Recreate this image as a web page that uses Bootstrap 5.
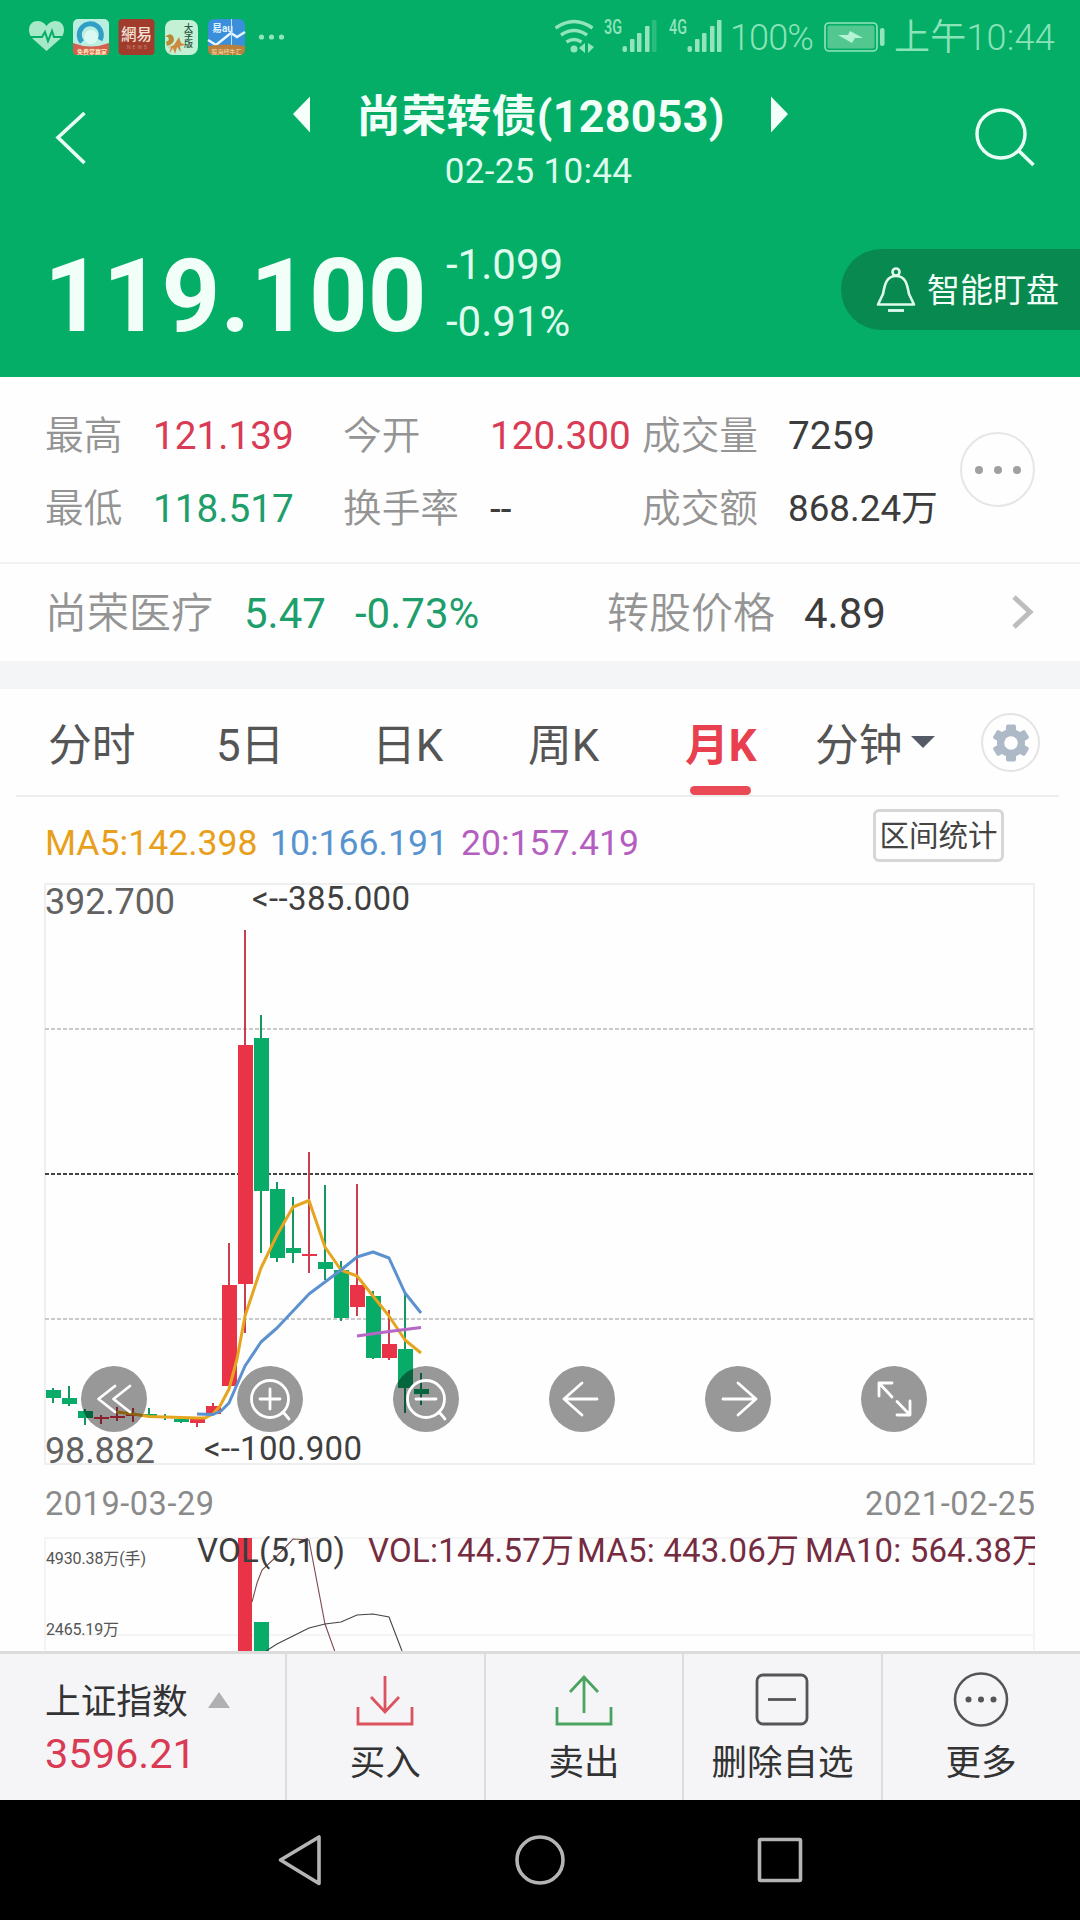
<!DOCTYPE html>
<html lang="zh-CN">
<head>
<meta charset="utf-8">
<meta name="viewport" content="width=device-width, initial-scale=1">
<title>尚荣转债(128053)</title>
<link rel="stylesheet" href="https://cdn.jsdelivr.net/npm/bootstrap@5.3.0/dist/css/bootstrap.min.css">
<style>
body{font-family:Roboto,"Noto Sans CJK SC",sans-serif;width:1080px;height:1920px;overflow:hidden;color:#3c3c3c;background:#fefefe;line-height:1}
svg{display:block;flex:none}
svg text{font-family:Roboto,"Noto Sans CJK SC",sans-serif}
.app{width:1080px;height:1920px}
.hd{background:#04ae67;height:377px;color:#f2fff8}
.statusbar{height:72px;color:#8be3b9;font-size:36px;font-weight:350}
.statusbar .pct{width:95px;padding-left:3px;letter-spacing:-.9px;line-height:76px}
.statusbar .clock{line-height:77px;margin-left:8px;letter-spacing:.2px}
.titlebar{height:128px}
.titlecol{width:495px;margin-left:208px}
.sec-name{font-size:44.8px;font-weight:700;line-height:58px;letter-spacing:.3px;margin-top:16px}
.sec-time{font-size:35px;line-height:44px;color:#dffbee;margin-top:4px;letter-spacing:.3px;padding-right:4px}
.pricebar{height:177px}
.px-now{font-size:102.5px;font-weight:700;line-height:110px;margin-top:41px;padding-left:44px;width:446px}
.px-chg{font-size:42px;line-height:57px;margin-top:36px;color:#dffbee}
.watch{width:239px;height:81px;border-radius:41px 0 0 41px;background:#07894f;margin-top:49px;font-size:33px;padding-left:35px}
.watch span{margin-left:11px;line-height:80px;padding-top:3px}
.stats{height:187px;border-bottom:2px solid #f1f1f1;padding:22px 0 0 45px}
.statgrid{display:grid;grid-template-columns:108px 190px 147px 152px 146px 160px;grid-auto-rows:73px;line-height:73px;font-size:38.7px;width:903px;white-space:nowrap}
.statgrid .amt{font-size:36.8px}
.lbl{color:#949494;font-weight:350}
.up{color:#d93a54}.down{color:#1d9e6b}
.morebtn{width:75px;height:75px;border:2px solid #e6e6e6;margin:33px 0 0 12px;gap:11px}
.morebtn i{width:8px;height:8px;border-radius:50%;background:#a0a0a0}
.stockrow{height:97px;padding-left:45px;font-size:42px;line-height:100px}
.stockgrid{display:grid;grid-template-columns:199px 111px 252px 197px 207px;white-space:nowrap}
.band{height:28px;background:#f4f5f7}
.tabrow{height:108px;margin:0 21px 0 16px;border-bottom:2px solid #ededed;font-size:43.8px;padding-left:32px}
.tabrow .nav-link{padding:0;color:#555;line-height:114px;height:107px;font-weight:400;text-align:left;white-space:nowrap}
.tabrow .nav-link.active{color:#e8404f;font-weight:700;position:relative}
.tabrow .nav-link.active::after{content:"";position:absolute;left:5px;bottom:1px;width:61px;height:9px;border-radius:5px;background:#ea4a55}
.gearbtn{width:59px;height:59px;border:2px solid #e4e4e4;margin-top:24px}
.maline{height:85px;padding:0 76px 0 45px;font-size:35.6px}
.maline span{line-height:92px;white-space:nowrap}
.rangebtn{width:131px;height:53px;border:3px solid #d6d6d6;border-radius:6px;font-size:29.5px;line-height:48px;padding:0;margin-top:12px;color:#444;background:none;text-align:center;white-space:nowrap}
.plot{height:769px}
.bottombar{height:149px;border-top:3px solid #dcdcdd;background:#f5f5f8;color:#333}
.idx{width:285px;padding:28px 0 0 45px}
.idx .nm{font-size:35.7px;line-height:40px}
.idx .vl{font-size:41.5px;line-height:50px;margin-top:7px}
.act{width:198.6px;border-left:2px solid #dcdcdd;font-size:35.5px;padding-top:17px}
.act span{line-height:46px;margin-top:13px;white-space:nowrap}
.sysnav{height:120px;background:#000}
</style>
</head>
<body>
<div class="app d-flex flex-column">
<header class="hd">
  <div class="statusbar d-flex">
    <svg width="555" height="72" viewBox="0 0 555 72">
      <path d="M46.500 51 33 39q-4-4-4-9c0-10 12-12 17.500-4C52 18 64 20 64 30q0 5-4 9z" fill="#a5e9c8"/>
      <path d="M30 37h12l3-5 3 9 4-10 2 6h11" fill="none" stroke="#04ae67" stroke-width="2"/>
      <rect x="73" y="19" width="36" height="36" rx="5" fill="#b9eee0"/>
      <path d="M82 42a11 11 0 1 1 18-2" fill="none" stroke="#2f9fc6" stroke-width="5"/><circle cx="91" cy="37" r="7" fill="#dcf8f2"/>
      <path d="M73 43q18 7 36 0v8q0 4-4 4H77q-4 0-4-4z" fill="#d4604f"/><text x="77" y="54" font-size="6" font-weight="700" fill="#ffe5bc">免费掌赢家</text>
      <rect x="118.500" y="19" width="36" height="36" rx="4" fill="#a13c2c"/><text x="121" y="40" font-size="15.500" font-weight="500" fill="#f2e3d8" style="font-family:'Noto Sans CJK TC'">網易</text><text x="127" y="49" font-size="5" letter-spacing="2" fill="#e0aa9a">NEWS</text>
      <rect x="165" y="20" width="33" height="35" rx="8" fill="#c4f1d6"/>
      <text font-size="9" font-weight="500" fill="#28533c"><tspan x="184" y="31">大</tspan><tspan x="184" y="39">字</tspan><tspan x="184" y="47">版</tspan></text>
      <path d="M165 37q5-5 8-1 3 6-3 9l-3 1-1-4 3-2-1-3z" fill="#b98a36"/><path d="M169 54l2-7-4 1 7-3 5-8 2 6 5 2-6 1 1 6-4-5-2 7-2-6z" fill="#cf8840"/>
      <rect x="208" y="19" width="37" height="36" rx="6" fill="#3a8fdb"/><path d="M208 40l8 5 15-12 6 4 8-5" fill="none" stroke="#e8f8ff" stroke-width="2.500"/><path d="M231.500 19v26" stroke="#bfe3f8"/><text x="212" y="32" font-size="10" font-weight="700" fill="#dff3ff">易au</text><path d="M208 46q18-3 37 0v3q0 6-6 6h-25q-6 0-6-6z" fill="#b9803e"/><text x="211.500" y="54" font-size="6" fill="#ffe4b2">股海经牛汇</text>
      <g fill="#92e4bd"><circle cx="261.500" cy="37" r="2.600"/><circle cx="271.500" cy="37" r="2.600"/><circle cx="281.500" cy="37" r="2.600"/></g>
    </svg>
    <svg width="172" height="72" viewBox="0 0 172 72" fill="#92e4bd">
      <g fill="none" stroke="#92e4bd" stroke-width="3.400"><path d="M.5 28q18.500-13 37 0"/><path d="M6 35q13-9 26 0"/><path d="M11.500 42q7.500-5 15 0"/></g>
      <circle cx="19" cy="49" r="3.500"/><path d="M24 48l6-5v10zM33 43v10l6-6z"/>
      <text x="49" y="34" font-size="20" font-weight="500" textLength="18" lengthAdjust="spacingAndGlyphs">3G</text>
      <text x="114" y="34" font-size="20" font-weight="500" textLength="18" lengthAdjust="spacingAndGlyphs">4G</text>
      <rect x="67.500" y="46" width="4.500" height="6" rx="2"/><rect x="75" y="39" width="4.500" height="13" rx="1"/><rect x="82" y="33" width="4.500" height="19" rx="1"/><rect x="90" y="26" width="4.500" height="26" rx="1"/><rect x="97" y="20" width="4.500" height="32" rx="1" opacity=".28"/>
      <rect x="132.500" y="46" width="4.500" height="6" rx="2"/><rect x="140" y="39" width="4.500" height="13" rx="1"/><rect x="147" y="33" width="4.500" height="19" rx="1"/><rect x="155" y="26" width="4.500" height="26" rx="1"/><rect x="162" y="20" width="4.500" height="32" rx="1"/>
    </svg>
    <span class="pct">100%</span>
    <svg width="64" height="72" viewBox="822 0 64 72"><rect x="825" y="23" width="52" height="28" rx="4" fill="none" stroke="#92e4bd" stroke-width="1.600"/><rect x="827.500" y="25.500" width="47" height="23" rx="2" fill="#52c790"/><path d="M838 35h10l2-4 13 7h-8l-3 5z" fill="#b5f3d6"/><rect x="880" y="28" width="4.500" height="18" rx="2" fill="#92e4bd"/></svg>
    <span class="clock text-nowrap">上午10:44</span>
  </div>
  <div class="titlebar d-flex">
    <svg width="85" height="128" viewBox="0 72 85 128" overflow="visible"><path d="M84.500 113 58 137.500 84.500 163" fill="none" stroke="#e9fff5" stroke-width="3.600"/></svg>
    <div class="titlecol d-flex justify-content-between">
      <svg width="17" height="128" viewBox="293 72 17 128"><path d="M310 96.500v36L293 114z" fill="#f4fffa"/></svg>
      <div class="text-center text-nowrap"><div class="sec-name">尚荣转债(128053)</div><div class="sec-time">02-25 10:44</div></div>
      <svg width="17" height="128" viewBox="771 72 17 128"><path d="M771 96.500v36L788 114z" fill="#f4fffa"/></svg>
    </div>
    <svg width="292" height="128" viewBox="788 72 292 128"><circle cx="1001" cy="134" r="24" fill="none" stroke="#e9fff5" stroke-width="3.400"/><path d="M1018 150l15.500 15" stroke="#e9fff5" stroke-width="3.600"/></svg>
  </div>
  <div class="pricebar d-flex">
    <div class="px-now">119.100</div>
    <div class="px-chg flex-grow-1">-1.099<br>-0.91%</div>
    <div class="watch d-flex align-items-center">
      <svg width="40" height="46" viewBox="0 0 40 46" fill="none" stroke="#dffbee" stroke-width="2.600"><circle cx="20" cy="5" r="3.500"/><path d="M2 37.500h36L33 27c-2-11-4-18-13-18S9 16 7 27z" stroke-linejoin="round"/><path d="M12 43.500h16" stroke-width="2.800"/></svg>
      <span>智能盯盘</span>
    </div>
  </div>
</header>

<section class="stats d-flex">
  <div class="statgrid">
    <span class="lbl">最高</span><span class="up">121.139</span><span class="lbl">今开</span><span class="up">120.300</span><span class="lbl">成交量</span><span>7259</span>
    <span class="lbl">最低</span><span class="down">118.517</span><span class="lbl">换手率</span><span>--</span><span class="lbl">成交额</span><span class="amt">868.24万</span>
  </div>
  <div class="morebtn rounded-circle d-flex align-items-center justify-content-center"><i></i><i></i><i></i></div>
</section>
<section class="stockrow d-flex">
  <div class="stockgrid"><span class="lbl">尚荣医疗</span><span class="down">5.47</span><span class="down">-0.73%</span><span class="lbl">转股价格</span><span>4.89</span></div>
  <svg width="24" height="98" viewBox="1011 564 24 98"><path d="M1014 597l16 15-16 15" fill="none" stroke="#bdbdbd" stroke-width="5"/></svg>
</section>
<div class="band"></div>
<nav class="tabrow nav flex-nowrap">
  <a class="nav-link" style="width:168px">分时</a><a class="nav-link" style="width:156px">5日</a><a class="nav-link" style="width:156px">日K</a><a class="nav-link" style="width:157px">周K</a><a class="nav-link active" style="width:130px">月K</a><a class="nav-link" style="width:96px">分钟</a>
  <svg width="70" height="105" viewBox="911 689 70 105"><path d="M911 736h24l-12 12z" fill="#555b66"/></svg>
  <div class="gearbtn rounded-circle d-flex align-items-center justify-content-center">
    <svg width="38" height="38" viewBox="-19 -19 38 38" fill="#adb9c7"><g id="teeth"><rect x="-5" y="-18.500" width="10" height="37" rx="2"/><rect x="-5" y="-18.500" width="10" height="37" rx="2" transform="rotate(60)"/><rect x="-5" y="-18.500" width="10" height="37" rx="2" transform="rotate(120)"/></g><circle r="14"/><circle r="6.800" fill="#fefefe"/></svg>
  </div>
</nav>
<div class="maline d-flex">
  <span style="width:225px;color:#e8a01c">MA5:142.398</span><span style="width:191px;color:#5794cf">10:166.191</span><span class="flex-grow-1" style="color:#b45fc0">20:157.419</span>
  <button class="rangebtn" type="button">区间统计</button>
</div>

<svg class="plot" id="plot" width="1080" height="769" viewBox="0 882 1080 769">
  <g fill="none" stroke="#efefef" stroke-width="2"><path d="M45 884H1034V1464H45z"/><path d="M45 1650V1538H1034V1650M45 1635H1034" stroke="#f4f4f4"/></g>
  <g stroke-width="1.500" stroke-dasharray="4 2"><path d="M45 1029H1034M45 1319H1034" stroke="#b9b9b9"/><path d="M45 1174H1034" stroke="#444" stroke-width="1.800"/></g>
  <g id="candles"></g>
  <g fill="none" stroke-width="3" stroke-linejoin="round">
    <path stroke="#e5a51f" d="M117 1412l16 2 16 2.500 16 .5 32 1h8l8-4 7-8 9-17 8-30 8-43 16-48 16-33 16-28 16-6.500 16 46.500 16 23 16 6 16 20 16 20 16 24 16 13"/>
    <path stroke="#5b91cf" d="M197 1414l16 .5 8-3.500 8-8 16-37 16-24 16-14 32-34 32-24 16-13 16-5 16 6 16 35 16 20"/>
    <path stroke="#b666c4" d="M357 1336l32-4.500 32-4"/>
  </g>
  <g font-size="36" fill="#626262"><text x="45" y="914" textLength="130">392.700</text><text x="45" y="1463" textLength="110">98.882</text></g>
  <g font-size="33" fill="#3f3f3f"><text x="252" y="910" textLength="158">&lt;--385.000</text><text x="204" y="1460" textLength="158">&lt;--100.900</text></g>
  <g font-size="32.500" fill="#8a8a8a"><text x="45" y="1515" textLength="169">2019-03-29</text><text x="865" y="1515" textLength="170">2021-02-25</text></g>
  <rect x="238" y="1538" width="14" height="113" fill="#e93448"/><rect x="254" y="1622" width="15" height="29" fill="#08ab67"/>
  <g fill="none" stroke-width="1.100"><path stroke="#7d4a4e" d="M252 1602l5-19 5-13 15-14 16-17 16 1 16 84 10 28"/><path stroke="#444" d="M266 1651l11-7 16-8 16-8 16-4 16-2 16-7 16-1 16 3 13 34"/></g>
  <g font-size="16" fill="#555"><text x="46" y="1564" textLength="100">4930.38万(手)</text><text x="46" y="1635" textLength="73">2465.19万</text></g>
  <svg x="0" y="1536" width="1035" height="60" viewBox="0 1536 1035 60"><g font-size="33"><text x="197" y="1562" textLength="148" fill="#3d3d3d">VOL(5,10)</text><g fill="#762c40"><text x="368" y="1562" textLength="206">VOL:144.57万</text><text x="577" y="1562" textLength="222">MA5: 443.06万</text><text x="805" y="1562" textLength="240">MA10: 564.38万</text></g></g></svg>
  <g fill="#000" fill-opacity=".4"><circle cx="114" cy="1399" r="33"/><circle cx="270" cy="1399" r="33"/><circle cx="426" cy="1399" r="33"/><circle cx="582" cy="1399" r="33"/><circle cx="738" cy="1399" r="33"/><circle cx="894" cy="1399" r="33"/></g>
  <g fill="none" stroke="#fff" stroke-width="2.800" stroke-linecap="round" stroke-linejoin="round">
    <path d="M115 1386l-16.500 13 16.500 13M130 1386l-16.500 13 16.500 13"/>
    <circle cx="270" cy="1399" r="18.500"/><path d="M260 1399h20M270 1389v20M282 1413l2 0 5 6"/>
    <circle cx="426" cy="1399" r="18.500"/><path d="M416 1399h20M438 1413l2 0 5 6"/>
    <path d="M582 1383l-18 16 18 16M564 1399h33"/><path d="M738 1383l18 16-18 16M756 1399h-33"/>
    <path d="M892 1383h-13v13M879.500 1383.500l12.500 13.500M910 1401v14h-13M909.500 1414.500L897 1401.500"/>
  </g>
</svg>

<footer class="bottombar d-flex">
  <div class="idx">
    <div class="nm d-flex">上证指数<svg class="ms-auto" style="margin-right:55px" width="22" height="40" viewBox="0 0 22 40"><path d="M0 26 11 10l11 16z" fill="#b0b0b3"/></svg></div>
    <div class="vl up">3596.21</div>
  </div>
  <div class="act d-flex flex-column align-items-center"><svg width="58" height="56" viewBox="0 0 58 56" fill="none" stroke="#dc5360" stroke-width="2.800"><path d="M2 36v17h54V36M29 5v35M15 26l14 15 14-15"/></svg><span>买入</span></div>
  <div class="act d-flex flex-column align-items-center"><svg width="58" height="56" viewBox="0 0 58 56" fill="none" stroke="#4aa35f" stroke-width="2.800"><path d="M2 36v17h54V36M29 42V6M15 21 29 6l14 15"/></svg><span>卖出</span></div>
  <div class="act d-flex flex-column align-items-center"><svg width="58" height="56" viewBox="0 0 58 56" fill="none" stroke="#555" stroke-width="2.800"><rect x="4" y="4" width="50" height="49" rx="6"/><path d="M15 28.500h28"/></svg><span>删除自选</span></div>
  <div class="act d-flex flex-column align-items-center"><svg width="58" height="56" viewBox="0 0 58 56"><circle cx="29" cy="28.500" r="26" fill="none" stroke="#555" stroke-width="2.600"/><g fill="#555"><circle cx="16.500" cy="28.500" r="3"/><circle cx="29" cy="28.500" r="3"/><circle cx="41.500" cy="28.500" r="3"/></g></svg><span>更多</span></div>
</footer>
<div class="sysnav"><svg width="1080" height="120" viewBox="0 0 1080 120" fill="none" stroke="#b4b4b4" stroke-width="3.600" stroke-linejoin="round"><path d="M319 37v46.500L280.500 60z"/><circle cx="540" cy="60" r="23"/><rect x="759.500" y="39.500" width="41" height="41" rx="1"/></svg></div>
</div>
<script src="https://cdn.jsdelivr.net/npm/bootstrap@5.3.0/dist/js/bootstrap.bundle.min.js"></script>
<script>
// Monthly candles: [rising, wick top, body top, body bottom, wick bottom]
const months=[[0,1388,1390,1398,1403],[0,1386,1398,1404,1406],[0,1409,1411,1418,1425],[1,1415,1417,1419,1424],[1,1407,1416,1418,1421],[1,1408,1414,1416,1422],[0,1408,1414,1416,1416],[0,1414,1416,1417,1420],[0,1418,1419,1422,1423],[1,1418,1419,1423,1427],[1,1403,1406,1414,1415],[1,1243,1285,1386,1386],[1,930,1045,1284,1333],[0,1015,1038,1191,1253],[0,1182,1189,1258,1262],[0,1197,1248,1253,1263],[1,1152,1254,1256,1273],[0,1185,1262,1269,1280],[0,1261,1270,1318,1321],[1,1184,1285,1307,1316],[0,1291,1296,1358,1359],[1,1310,1344,1358,1360],[0,1292,1349,1388,1413],[0,1373,1389,1394,1405]];
document.getElementById('candles').innerHTML=months.map(([up,h,t,b,l],i)=>{const x=46+16*i,c=up?'#e93448':'#08ab67',w=up?'#c93d50':'#159760';return `<rect x="${x+6}" y="${h}" width="2" height="${l-h}" fill="${w}"/><rect x="${x}" y="${t}" width="15" height="${b-t}" fill="${c}"/>`}).join('');
</script>
</body>
</html>
